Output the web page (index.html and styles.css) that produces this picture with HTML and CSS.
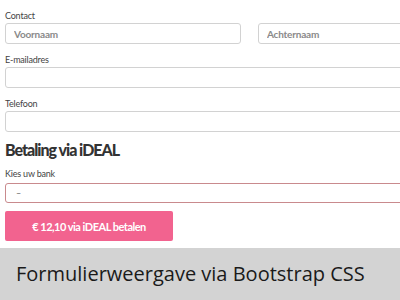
FILE: index.html
```html
<!DOCTYPE html>
<html lang="nl">
<head>
    <meta charset="UTF-8">
    <meta name="viewport" content="width=device-width, initial-scale=1.0">
    <title>Formulierweergave</title>
    <link rel="stylesheet" href="styles.css">
</head>
<body>
<div class="form-wrap">
    <div class="form-group">
        <label class="form-label">Contact</label>
        <div class="row">
            <input type="text" class="form-control first" placeholder="Voornaam">
            <input type="text" class="form-control last" placeholder="Achternaam">
        </div>
    </div>

    <div class="form-group">
        <label class="form-label" for="email">E-mailadres</label>
        <input type="text" id="email" class="form-control wide">
    </div>

    <div class="form-group">
        <label class="form-label" for="tel">Telefoon</label>
        <input type="text" id="tel" class="form-control wide">
    </div>

    <h2 class="section-title">Betaling via iDEAL</h2>

    <div class="form-group bank-group">
        <label class="form-label" for="bank">Kies uw bank</label>
        <div class="select-box" id="bank">–</div>
    </div>

    <button class="pay">€ 12,10 via iDEAL betalen</button>
</div>

<div class="caption">Formulierweergave via Bootstrap CSS</div>
</body>
</html>
```

FILE: styles.css
```css
body {
    margin: 0;
    font-family: Lato, "Open Sans", sans-serif;
    color: #333;
    background: #fff;
    overflow: hidden;
}

.form-wrap {
    box-sizing: border-box;
    padding: 10px 0 0 5px;
    height: 248px;
}

.form-group {
    margin-bottom: 10px;
}

.form-label {
    display: block;
    font-size: 9px;
    line-height: 12px;
    letter-spacing: -0.2px;
    color: #444;
    margin-bottom: 1px;
}

.row {
    display: flex;
    gap: 17px;
}

.form-control {
    display: block;
    flex-shrink: 0;
    box-sizing: border-box;
    height: 21px;
    padding: 0 8px;
    border: 1px solid #d2d2d2;
    border-radius: 3px;
    font-family: Lato, sans-serif;
    font-size: 10px;
    font-weight: bold;
    color: #555;
    background: #fff;
}

.form-control::placeholder {
    color: #8a8a8a;
    font-weight: bold;
    letter-spacing: -0.2px;
}

.first {
    width: 236px;
}

.last {
    width: 160px;
}

.wide {
    width: 410px;
}

.section-title {
    margin: 0 0 10px 0;
    font-size: 16px;
    line-height: 16px;
    font-weight: 900;
    letter-spacing: -1px;
    color: #333;
}

.bank-group {
    margin-bottom: 8px;
}

.bank-group .form-label {
    margin-bottom: 3px;
}

.select-box {
    box-sizing: border-box;
    width: 410px;
    height: 20px;
    padding: 0 10px;
    border: 1px solid #c98a8d;
    border-radius: 3px;
    font-size: 9px;
    line-height: 18px;
    color: #666;
}

.pay {
    display: block;
    width: 168px;
    height: 30px;
    padding: 0;
    border: none;
    border-radius: 2px;
    background: #f2638f;
    color: #fff;
    font-family: Lato, sans-serif;
    font-size: 11px;
    font-weight: bold;
    letter-spacing: -0.5px;
}

.caption {
    height: 52px;
    background: #d3d3d3;
    color: #1a1a1a;
    font-family: "Open Sans", sans-serif;
    font-size: 20px;
    line-height: 52px;
    padding-left: 16px;
}
```
